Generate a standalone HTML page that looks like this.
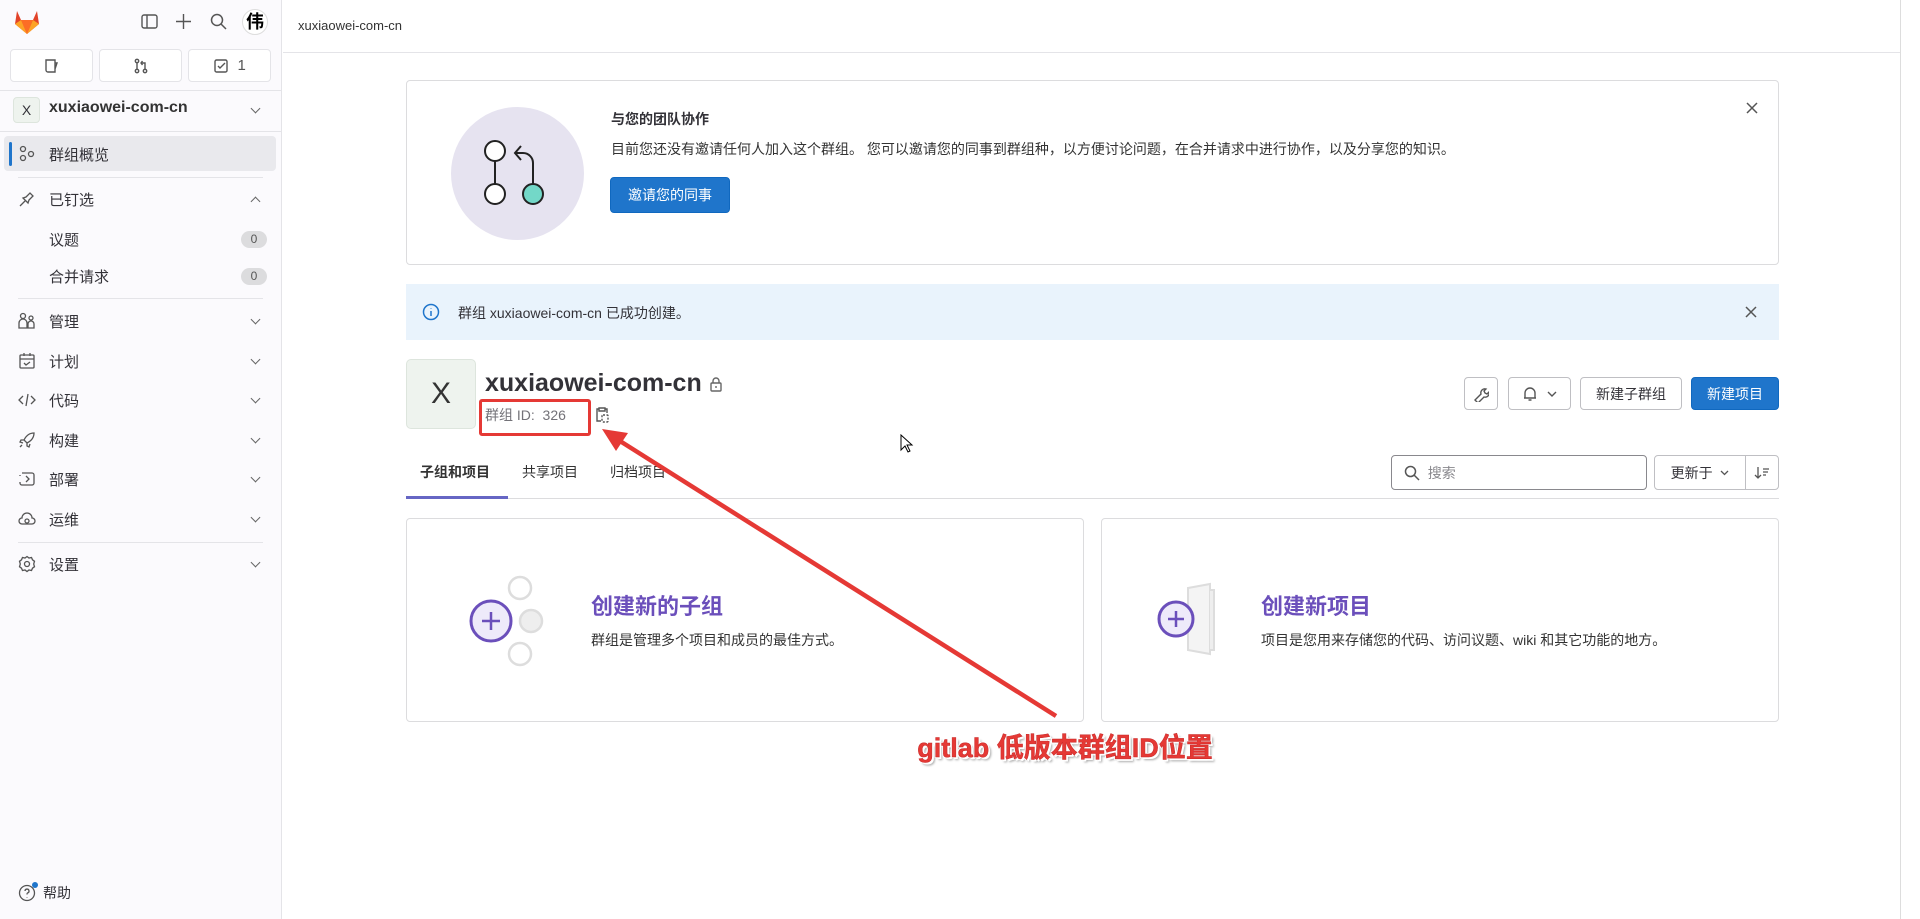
<!DOCTYPE html>
<html><head><meta charset="utf-8"><style>
*{box-sizing:border-box;margin:0;padding:0}
body{width:1920px;height:919px;overflow:hidden;background:#fff;font-family:"Liberation Sans","Noto Sans CJK SC",sans-serif;color:#333238;position:relative;font-size:15px}
.a{position:absolute}
.sb{left:0;top:0;width:282px;height:919px;background:#fbfafd;border-right:1px solid #e4e4e8}
.nav{position:absolute;left:0;width:282px;height:32px;display:flex;align-items:center;font-size:15px;color:#333238}
.nav .t{position:absolute;left:49px}
.nav svg.i{position:absolute;left:18px}
.nav .ch{position:absolute;left:252px;width:7px;height:7px;border-right:1.5px solid #666;border-bottom:1.5px solid #666;transform:rotate(45deg);margin-top:-4px}
.badge{position:absolute;left:241px;width:26px;height:17px;border-radius:9px;background:#dcdcde;font-size:12px;text-align:center;line-height:17px;color:#555}
.sep{position:absolute;left:18px;width:245px;height:1px;background:#e4e4e8}
.btn{position:absolute;border:1px solid #bfbfc3;border-radius:4px;background:#fff;display:flex;align-items:center;justify-content:center;font-size:15px;color:#333238}
.card{position:absolute;border:1px solid #dcdcde;border-radius:4px;background:#fff}
</style></head><body>
<div class="a sb">
  <svg class="a" style="left:13px;top:9px" width="28" height="26" viewBox="0 0 28 26"><path d="M14 25L2 15l2-13 4 9h12l4-9 2 13z" fill="#e24329"/><path d="M14 25L8 11h12z" fill="#fc6d26"/><path d="M2 15l6-4 6 14z" fill="#fca326"/><path d="M26 15l-6-4-6 14z" fill="#fca326"/></svg>
  <svg class="a" style="left:141px;top:13px" width="17" height="17" viewBox="0 0 17 17" fill="none" stroke="#555" stroke-width="1.4"><rect x="1" y="2" width="15" height="13" rx="2"/><path d="M6 2v13"/></svg>
  <svg class="a" style="left:175px;top:13px" width="17" height="17" viewBox="0 0 17 17" stroke="#555" stroke-width="1.4"><path d="M8.5 1v15M1 8.5h15"/></svg>
  <svg class="a" style="left:210px;top:13px" width="17" height="17" viewBox="0 0 17 17" fill="none" stroke="#555" stroke-width="1.5"><circle cx="7" cy="7" r="5.5"/><path d="M11 11l5 5"/></svg>
  <div class="a" style="left:242px;top:9px;width:26px;height:26px;border-radius:50%;background:#fff;border:1px solid #ddd;font-size:18px;font-weight:bold;text-align:center;line-height:24px;color:#000">伟</div>
  <div class="btn" style="left:10px;top:49px;width:83px;height:33px;border-color:#e4e4e8"><svg width="16" height="16" viewBox="0 0 16 16" fill="none" stroke="#555" stroke-width="1.4"><path d="M2 2h9v12H4a2 2 0 0 1-2-2zM11 5h2l-2 6"/></svg></div>
  <div class="btn" style="left:99px;top:49px;width:83px;height:33px;border-color:#e4e4e8"><svg width="16" height="16" viewBox="0 0 16 16" fill="none" stroke="#555" stroke-width="1.4"><circle cx="4" cy="3" r="1.7"/><circle cx="4" cy="13" r="1.7"/><circle cx="12" cy="13" r="1.7"/><path d="M4 5v6M12 11V5H8M9.5 3 8 5l1.5 2"/></svg></div>
  <div class="btn" style="left:188px;top:49px;width:83px;height:33px;border-color:#e4e4e8;color:#555"><svg width="16" height="16" viewBox="0 0 16 16" fill="none" stroke="#555" stroke-width="1.4"><rect x="2" y="2" width="12" height="12" rx="1.5"/><path d="M5 8l2 2 5-5"/></svg>&nbsp; 1</div>
  <div class="a" style="left:0;top:90px;width:282px;height:1px;background:#e4e4e8"></div>
  <div class="a" style="left:13px;top:97px;width:27px;height:26px;border-radius:4px;background:#eef3ee;border:1px solid #dde5dd;text-align:center;line-height:24px;font-size:14px">X</div>
  <div class="a" style="left:49px;top:99px;font-size:16px;font-weight:bold;color:#333">xuxiaowei-com-cn</div>
  <div class="nav" style="top:94px"><span class="ch"></span></div>
  <div class="a" style="left:0;top:131px;width:282px;height:1px;background:#e4e4e8"></div>
  <div class="a" style="left:4px;top:136px;width:272px;height:35px;border-radius:4px;background:#e9e9ed"></div>
  <div class="a" style="left:9px;top:142px;width:3px;height:24px;border-radius:2px;background:#1f75cb"></div>
  <div class="nav" style="top:138px"><svg class="i" width="18" height="18" viewBox="0 0 18 18" fill="none" stroke="#555" stroke-width="1.3"><circle cx="5" cy="4" r="2.5"/><circle cx="5" cy="13" r="2.5"/><circle cx="13" cy="9" r="2.5"/></svg><span class="t">群组概览</span></div>
  <div class="sep" style="top:177px"></div>
  <div class="nav" style="top:183px"><svg class="i" width="18" height="18" viewBox="0 0 18 18" fill="none" stroke="#555" stroke-width="1.3"><path d="M2 16l5-5M5 8l5 5 1-3 4-4-3-3-4 4z"/></svg><span class="t">已钉选</span><span class="ch" style="transform:rotate(225deg);margin-top:4px"></span></div>
  <div class="nav" style="top:223px"><span class="t">议题</span><span class="badge">0</span></div>
  <div class="nav" style="top:260px"><span class="t">合并请求</span><span class="badge">0</span></div>
  <div class="sep" style="top:298px"></div>
  <div class="nav" style="top:305px"><svg class="i" width="18" height="18" viewBox="0 0 18 18" fill="none" stroke="#555" stroke-width="1.3"><circle cx="5" cy="4" r="2.5"/><circle cx="13" cy="6" r="2"/><path d="M1 16v-5a4 4 0 0 1 8 0v5zM10 16v-4a3 3 0 0 1 6 0v4z"/></svg><span class="t">管理</span><span class="ch"></span></div>
  <div class="nav" style="top:345px"><svg class="i" width="18" height="18" viewBox="0 0 18 18" fill="none" stroke="#555" stroke-width="1.3"><rect x="2" y="3" width="14" height="13" rx="1"/><path d="M2 7h14M6 1v3M12 1v3M6 11l2 2 4-3"/></svg><span class="t">计划</span><span class="ch"></span></div>
  <div class="nav" style="top:384px"><svg class="i" width="18" height="18" viewBox="0 0 18 18" fill="none" stroke="#555" stroke-width="1.3"><path d="M5 5l-4 4 4 4M13 5l4 4-4 4M10 3l-2 12"/></svg><span class="t">代码</span><span class="ch"></span></div>
  <div class="nav" style="top:424px"><svg class="i" width="18" height="18" viewBox="0 0 18 18" fill="none" stroke="#555" stroke-width="1.3"><path d="M16 2c-5 0-8 3-10 7l3 3c4-2 7-5 7-10zM6 9H3l-1 2 3 1M9 12v3l2 1 1-3M4 14l-2 2"/></svg><span class="t">构建</span><span class="ch"></span></div>
  <div class="nav" style="top:463px"><svg class="i" width="18" height="18" viewBox="0 0 18 18" fill="none" stroke="#555" stroke-width="1.3"><path d="M4 3h10a2 2 0 0 1 2 2v8a2 2 0 0 1-2 2H4a2 2 0 0 1-2-2v-1M2 6V5M8 6l3 3-3 3"/></svg><span class="t">部署</span><span class="ch"></span></div>
  <div class="nav" style="top:503px"><svg class="i" width="18" height="18" viewBox="0 0 18 18" fill="none" stroke="#555" stroke-width="1.3"><path d="M4 14a3 3 0 0 1 0-6 5 5 0 0 1 10 0 3 3 0 0 1 0 6z"/><circle cx="9" cy="11" r="2"/></svg><span class="t">运维</span><span class="ch"></span></div>
  <div class="sep" style="top:542px"></div>
  <div class="nav" style="top:548px"><svg class="i" width="18" height="18" viewBox="0 0 18 18" fill="none" stroke="#555" stroke-width="1.3"><circle cx="9" cy="9" r="2.5"/><path d="M9 1.5l2 1.5 2.5-.5 1 2.3 2 1.5-.8 2.7.8 2.7-2 1.5-1 2.3-2.5-.5-2 1.5-2-1.5-2.5.5-1-2.3-2-1.5.8-2.7-.8-2.7 2-1.5 1-2.3 2.5.5z"/></svg><span class="t">设置</span><span class="ch"></span></div>
  <div class="nav" style="top:877px"><svg class="i" width="18" height="18" viewBox="0 0 18 18" fill="none" stroke="#555" stroke-width="1.3"><circle cx="9" cy="9" r="7.5"/><path d="M7 7a2 2 0 1 1 2.5 2c-.5.2-.5 1-.5 1.5M9 13v.5"/></svg><span class="a" style="left:32px;top:5px;width:6px;height:6px;border-radius:50%;background:#1f75cb"></span><span class="t" style="left:43px;font-size:14px">帮助</span></div>
</div>

<div class="a" style="left:298px;top:18px;font-size:13px;color:#333">xuxiaowei-com-cn</div>
<div class="a" style="left:283px;top:52px;width:1617px;height:1px;background:#e4e4e8"></div>
<div class="a" style="left:1900px;top:0;width:1px;height:919px;background:#ddd"></div>

<div class="card" style="left:406px;top:80px;width:1373px;height:185px">
  <div class="a" style="left:44px;top:26px;width:133px;height:133px;border-radius:50%;background:#e6e3f0"></div>
  <svg class="a" style="left:70px;top:54px" width="80" height="80" viewBox="0 0 80 80" fill="#fff" stroke="#222" stroke-width="2"><circle cx="18" cy="16" r="10"/><circle cx="18" cy="59" r="10"/><circle cx="56" cy="59" r="10" fill="#73d8c8"/><path d="M18 26v23M56 49V28a10 10 0 0 0-10-10H38M44 11l-6 7 6 7" fill="none"/></svg>
  <div class="a" style="left:204px;top:28px;font-size:14px;font-weight:bold">与您的团队协作</div>
  <div class="a" style="left:204px;top:58px;font-size:14px;color:#333">目前您还没有邀请任何人加入这个群组。 您可以邀请您的同事到群组种，以方便讨论问题，在合并请求中进行协作，以及分享您的知识。</div>
  <div class="a" style="left:203px;top:96px;width:120px;height:36px;background:#1f75cb;border:1px solid #1068bf;border-radius:4px;color:#fff;font-size:14px;text-align:center;line-height:34px">邀请您的同事</div>
  <svg class="a" style="left:1339px;top:21px" width="12" height="12" stroke="#555" stroke-width="1.5"><path d="M1 1l10 10M11 1L1 11"/></svg>
</div>

<div class="a" style="left:406px;top:284px;width:1373px;height:56px;background:#e9f3fc">
  <svg class="a" style="left:16px;top:19px" width="18" height="18" viewBox="0 0 18 18" fill="none" stroke="#1f75cb" stroke-width="1.5"><circle cx="9" cy="9" r="7.5"/><path d="M9 8v5M9 5v.5"/></svg>
  <div class="a" style="left:52px;top:19px;font-size:14px">群组 xuxiaowei-com-cn 已成功创建。</div>
  <svg class="a" style="left:1339px;top:22px" width="12" height="12" stroke="#555" stroke-width="1.5"><path d="M1 1l10 10M11 1L1 11"/></svg>
</div>

<div class="a" style="left:406px;top:359px;width:70px;height:70px;border-radius:5px;background:#eef3ee;border:1px solid #dde5dd;font-size:30px;text-align:center;line-height:68px;color:#333">X</div>
<div class="a" style="left:485px;top:369px;font-size:25px;font-weight:bold;color:#333238">xuxiaowei-com-cn</div>
<svg class="a" style="left:709px;top:377px" width="14" height="15" viewBox="0 0 14 15" fill="none" stroke="#666" stroke-width="1.4"><rect x="2" y="6" width="10" height="8" rx="1"/><path d="M4 6V4a3 3 0 0 1 6 0v2M7 9v2"/></svg>
<div class="a" style="left:485px;top:405px;font-size:14px;color:#737278">群组 ID:&nbsp;&nbsp;326</div>
<svg class="a" style="left:595px;top:406px" width="14" height="17" viewBox="0 0 14 17" fill="none" stroke="#555" stroke-width="1.4"><path d="M4 3H2v12h4M10 3h2v4M4 2h6v3H4z"/><rect x="7" y="9" width="6" height="7" rx="1" stroke-dasharray="2 1.5"/></svg>
<div class="a" style="left:479px;top:399px;width:112px;height:37px;border:3px solid #e53935;border-radius:3px"></div>

<div class="btn" style="left:1464px;top:377px;width:34px;height:33px"><svg width="16" height="16" viewBox="0 0 16 16" fill="none" stroke="#555" stroke-width="1.4"><path d="M2 14l6-6a4 4 0 0 1 5-5l-2 2 1 2 2 1 2-2a4 4 0 0 1-5 5l-6 6z"/></svg></div>
<div class="btn" style="left:1508px;top:377px;width:63px;height:33px"><svg width="16" height="16" viewBox="0 0 16 16" fill="none" stroke="#555" stroke-width="1.4"><path d="M3 12V7a5 5 0 0 1 10 0v5zM2 12h12M6.5 14h3"/></svg>&nbsp;&nbsp;<svg width="10" height="6" stroke="#555" stroke-width="1.4" fill="none"><path d="M1 1l4 4 4-4"/></svg></div>
<div class="btn" style="left:1580px;top:377px;width:102px;height:33px;font-size:14px">新建子群组</div>
<div class="btn" style="left:1691px;top:377px;width:88px;height:33px;background:#1f75cb;border-color:#1068bf;color:#fff;font-size:14px">新建项目</div>

<div class="a" style="left:420px;top:462px;font-size:14px;font-weight:bold;color:#333">子组和项目</div>
<div class="a" style="left:522px;top:462px;font-size:14px;color:#333">共享项目</div>
<div class="a" style="left:610px;top:462px;font-size:14px;color:#333">归档项目</div>
<div class="a" style="left:406px;top:498px;width:1373px;height:1px;background:#dcdcde"></div>
<div class="a" style="left:406px;top:496px;width:102px;height:3px;background:#6666c4"></div>
<div class="btn" style="left:1391px;top:455px;width:256px;height:35px;justify-content:flex-start;padding-left:12px;border-color:#89888d;color:#89888d;font-size:14px"><svg width="16" height="16" viewBox="0 0 16 16" fill="none" stroke="#555" stroke-width="1.5"><circle cx="6.5" cy="6.5" r="5"/><path d="M10 10l5 5"/></svg>&nbsp;&nbsp;搜索</div>
<div class="btn" style="left:1654px;top:455px;width:92px;height:35px;border-radius:4px 0 0 4px;font-size:14px">更新于&nbsp;&nbsp;<svg width="9" height="6" stroke="#555" stroke-width="1.3" fill="none"><path d="M1 1l3.5 3.5L8 1"/></svg></div>
<div class="btn" style="left:1745px;top:455px;width:34px;height:35px;border-radius:0 4px 4px 0"><svg width="16" height="14" viewBox="0 0 16 14" fill="none" stroke="#555" stroke-width="1.3"><path d="M4 1v11M1 9l3 3 3-3M9 3h6M9 6h5M9 9h3"/></svg></div>

<div class="card" style="left:406px;top:518px;width:678px;height:204px">
  <svg class="a" style="left:54px;top:55px" width="90" height="95" viewBox="0 0 90 95"><circle cx="59" cy="14" r="11" fill="#fff" stroke="#ddd" stroke-width="2.5"/><circle cx="70" cy="47" r="11" fill="#eee" stroke="#ddd" stroke-width="2.5"/><circle cx="59" cy="80" r="11" fill="#fff" stroke="#ddd" stroke-width="2.5"/><circle cx="30" cy="47" r="20" fill="#eeeafa" stroke="#6b4fbb" stroke-width="3"/><path d="M30 38v18M21 47h18" stroke="#6b4fbb" stroke-width="2.5"/></svg>
  <div class="a" style="left:184px;top:70px;font-size:22px;font-weight:bold;color:#6b4fbb">创建新的子组</div>
  <div class="a" style="left:184px;top:111px;font-size:14px;color:#333">群组是管理多个项目和成员的最佳方式。</div>
</div>
<div class="card" style="left:1101px;top:518px;width:678px;height:204px">
  <svg class="a" style="left:52px;top:63px" width="80" height="80" viewBox="0 0 80 80"><path d="M34 6l22-4v70l-22-4z" fill="#f4f4f4" stroke="#ddd" stroke-width="2"/><path d="M56 8h4v60h-4" fill="#eee" stroke="#ddd" stroke-width="2"/><circle cx="22" cy="37" r="17" fill="#eeeafa" stroke="#6b4fbb" stroke-width="3"/><path d="M22 29v16M14 37h16" stroke="#6b4fbb" stroke-width="2.5"/></svg>
  <div class="a" style="left:159px;top:70px;font-size:22px;font-weight:bold;color:#6b4fbb">创建新项目</div>
  <div class="a" style="left:159px;top:111px;font-size:14px;color:#333">项目是您用来存储您的代码、访问议题、wiki 和其它功能的地方。</div>
</div>

<svg class="a" style="left:900px;top:434px" width="14" height="20" viewBox="0 0 14 20"><path d="M1 1v15l4-4 3 6 2-1-3-6h5z" fill="#fff" stroke="#000" stroke-width="1"/></svg>

<svg class="a" style="left:0;top:0" width="1920" height="919"><path d="M1056 716L612 436" stroke="#e53935" stroke-width="4.5" fill="none"/><path d="M602 429l26 4-12 18z" fill="#e53935"/></svg>
<div class="a" style="left:900px;top:726px;width:330px;text-align:center;font-size:27px;font-weight:bold;color:#e53935;-webkit-text-stroke:0.5px #c62828;text-shadow:2px 2px 0 #fff,-1px -1px 0 #fff,1px -1px 0 #fff,-1px 1px 0 #fff,3px 3px 2px rgba(0,0,0,.35)">gitlab 低版本群组ID位置</div>
</body></html>
